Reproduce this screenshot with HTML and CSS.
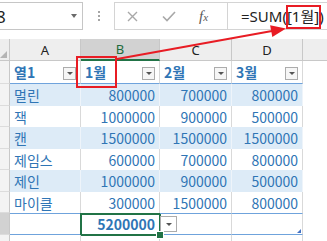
FILE: index.html
```html
<!DOCTYPE html>
<html lang="ko">
<head>
<meta charset="utf-8">
<title>Excel table</title>
<link rel="stylesheet" href="styles.css">
</head>
<body>
<div class="app">
  <div class="topbar">
    <div class="namebox"><span class="nb-text">B8</span><span class="caret"></span></div>
    <div class="dots"><span></span><span></span><span></span></div>
    <div class="fbar">
      <div class="fbtns">
        <svg class="ico-x" width="11" height="11" viewBox="0 0 11 11"><path d="M1 1 L10 10 M10 1 L1 10" stroke="#a8a8a8" stroke-width="1.4" fill="none"/></svg>
        <svg class="ico-ok" width="14" height="11" viewBox="0 0 14 11"><path d="M1 5.5 L5 9.5 L13 1" stroke="#a8a8a8" stroke-width="1.6" fill="none"/></svg>
        <span class="fx">f<span class="fx-x">x</span></span>
      </div>
      <div class="finput">=SUM([1월])</div>
    </div>
  </div>

  <div class="sheet">
    <!-- column headers -->
    <div class="corner"><span class="corner-tri"></span></div>
    <div class="ch">A</div>
    <div class="ch sel">B</div>
    <div class="ch">C</div>
    <div class="ch">D</div>
    <div class="ch last"></div>

    <!-- table header -->
    <div class="rh"></div>
    <div class="c th"><span class="lbl">열1</span><span class="dd"></span></div>
    <div class="c th"><span class="lbl">1월</span><span class="dd"></span></div>
    <div class="c th"><span class="lbl">2월</span><span class="dd"></span></div>
    <div class="c th"><span class="lbl">3월</span><span class="dd"></span></div>
    <div class="ex"></div>

    <div class="rh"></div>
    <div class="c band name">멀린</div>
    <div class="c band num">800000</div>
    <div class="c band num">700000</div>
    <div class="c band num">800000</div>
    <div class="ex"></div>

    <div class="rh"></div>
    <div class="c name">잭</div>
    <div class="c num">1000000</div>
    <div class="c num">900000</div>
    <div class="c num">500000</div>
    <div class="ex"></div>

    <div class="rh"></div>
    <div class="c band name">캔</div>
    <div class="c band num">1500000</div>
    <div class="c band num">1500000</div>
    <div class="c band num">1500000</div>
    <div class="ex"></div>

    <div class="rh"></div>
    <div class="c name">제임스</div>
    <div class="c num">600000</div>
    <div class="c num">700000</div>
    <div class="c num">800000</div>
    <div class="ex"></div>

    <div class="rh"></div>
    <div class="c band name">제인</div>
    <div class="c band num">1000000</div>
    <div class="c band num">900000</div>
    <div class="c band num">500000</div>
    <div class="ex"></div>

    <div class="rh"></div>
    <div class="c name">마이클</div>
    <div class="c num">300000</div>
    <div class="c num">1500000</div>
    <div class="c num">800000</div>
    <div class="ex"></div>

    <!-- total row -->
    <div class="rh sel"></div>
    <div class="c tot"></div>
    <div class="c tot num active">5200000</div>
    <div class="c tot"><span class="dd big"></span></div>
    <div class="c tot resize"></div>
    <div class="ex"></div>

    <div class="rh"></div>
    <div class="c plain"></div>
    <div class="c plain"></div>
    <div class="c plain"></div>
    <div class="c plain"></div>
    <div class="ex"></div>
  </div>

  <svg class="annot" width="327" height="241" viewBox="0 0 327 241">
    <rect x="77" y="57" width="39" height="30" fill="none" stroke="#e81c24" stroke-width="2"/>
    <rect x="287" y="6" width="33" height="22" fill="none" stroke="#e81c24" stroke-width="2"/>
    <line x1="117" y1="59" x2="272" y2="31" stroke="#e81c24" stroke-width="2"/>
    <polygon points="286,28.4 272.3,37 270.1,25.2" fill="#e81c24"/>
  </svg>
</div>
</body>
</html>
```

FILE: styles.css
```css
* {
  box-sizing: border-box;
  margin: 0;
  padding: 0;
}

body {
  margin: 0;
  width: 327px;
  height: 241px;
  overflow: hidden;
  background: #ffffff;
  font-family: "Noto Sans CJK KR", "Noto Sans", sans-serif;
}

.app {
  position: relative;
  width: 327px;
  height: 241px;
  overflow: hidden;
}

/* ---------- formula bar ---------- */
.topbar {
  height: 39px;
  display: flex;
  align-items: flex-start;
  padding-top: 2px;
  background: #ffffff;
}

.namebox {
  flex: none;
  width: 83px;
  height: 28px;
  border: 1px solid #c6c6c6;
  border-left: none;
  display: flex;
  align-items: center;
  overflow: hidden;
}

.nb-text {
  font-family: "Noto Sans", sans-serif;
  font-size: 17px;
  color: #222222;
  margin-left: -15px;
}

.caret {
  margin-left: auto;
  margin-right: 5px;
  width: 0;
  height: 0;
  border-left: 3.5px solid transparent;
  border-right: 3.5px solid transparent;
  border-top: 4px solid #6a6a6a;
}

.dots {
  flex: none;
  width: 31px;
  display: flex;
  flex-direction: column;
  align-items: center;
  gap: 2px;
  padding-top: 9px;
}

.dots span {
  width: 2px;
  height: 2px;
  background: #a6a6a6;
}

.fbar {
  flex: 1;
  height: 28px;
  border: 1px solid #d4d4d4;
  border-right: none;
  display: flex;
}

.fbtns {
  flex: none;
  width: 112px;
  display: flex;
  align-items: center;
}

.ico-x {
  margin-left: 12px;
}

.ico-ok {
  margin-left: 24px;
}

.fx {
  margin-left: 23px;
  font-family: "Liberation Serif", serif;
  font-style: italic;
  font-size: 15px;
  color: #595959;
  line-height: 1;
}

.fx-x {
  font-size: 11px;
}

.finput {
  flex: 1;
  border-left: 1px solid #d4d4d4;
  padding-left: 13px;
  font-family: "Noto Sans", "Noto Sans CJK KR", sans-serif;
  font-size: 15px;
  line-height: 26px;
  color: #222222;
  white-space: nowrap;
  overflow: hidden;
}

/* ---------- sheet grid ---------- */
.sheet {
  display: grid;
  grid-template-columns: 10px 71px 79px 72px 71px 1fr;
  grid-template-rows: 22px 23px 22px 21px 22px 21px 22px 21px 22px 20px;
}

.corner {
  position: relative;
  background: #eeeeee;
  border-right: 1px solid #c8c8c8;
  border-bottom: 1px solid #c8c8c8;
}

.corner-tri {
  position: absolute;
  right: 2px;
  bottom: 2px;
  width: 0;
  height: 0;
  border-left: 7px solid transparent;
  border-bottom: 7px solid #b4b4b4;
}

.ch {
  background: #eeeeee;
  border-right: 1px solid #c8c8c8;
  border-bottom: 1px solid #c8c8c8;
  font-family: "Noto Sans", sans-serif;
  font-size: 13px;
  color: #222222;
  display: flex;
  align-items: center;
  justify-content: center;
}

.ch.sel {
  background: #d2d2d2;
  color: #1e6b3c;
  border-bottom: 2px solid #217346;
}

.ch.last {
  border-right: none;
}

.rh {
  background: #f3f3f3;
  border-right: 1px solid #c8c8c8;
  border-bottom: 1px solid #dcdcdc;
}

.rh.sel {
  background: #d2d2d2;
}

.c {
  position: relative;
  display: flex;
  align-items: center;
  border-right: 1px solid #d9d9d9;
  font-size: 14px;
  color: #2f75b5;
  white-space: nowrap;
}

.band {
  background: #ddebf7;
  border-right-color: #eef4fa;
}

.name {
  padding-left: 4px;
}

.num {
  justify-content: flex-end;
  padding-right: 4px;
}

.th {
  background: #ffffff;
  border-bottom: 1px solid #6fa3dc;
  padding-left: 4px;
  padding-right: 4px;
  font-weight: 700;
}

.lbl {
  flex: 1;
}

.dd {
  position: relative;
  align-self: flex-end;
  margin-bottom: 3px;
  width: 13px;
  height: 13px;
  border: 1px solid #acacac;
  background: #f6f6f6;
}

.dd::after {
  content: "";
  position: absolute;
  left: 3px;
  top: 4px;
  width: 0;
  height: 0;
  border-left: 3px solid transparent;
  border-right: 3px solid transparent;
  border-top: 3px solid #555555;
}

.dd.big {
  align-self: center;
  margin: 0;
  width: 17px;
  height: 16px;
  background: #ffffff;
}

.dd.big::after {
  left: 5px;
  top: 6px;
}

.tot {
  border-top: 1px solid #6fa3dc;
  border-bottom: 1px solid #6fa3dc;
  font-weight: 700;
}

.active::after {
  content: "";
  position: absolute;
  left: -1px;
  top: -1px;
  right: -2px;
  bottom: -2px;
  border: 2px solid #217346;
}

.active::before {
  content: "";
  position: absolute;
  right: -5px;
  bottom: -5px;
  width: 6px;
  height: 6px;
  background: #217346;
  border: 1px solid #ffffff;
  z-index: 2;
}

.resize::after {
  content: "";
  position: absolute;
  right: 1px;
  bottom: 1px;
  width: 0;
  height: 0;
  border-left: 4px solid transparent;
  border-bottom: 4px solid #4472c4;
}

.plain {
  border-right-color: #d9d9d9;
}

.ex {
  background: #ffffff;
}

/* ---------- annotation overlay ---------- */
.annot {
  position: absolute;
  left: 0;
  top: 0;
  pointer-events: none;
}
```
